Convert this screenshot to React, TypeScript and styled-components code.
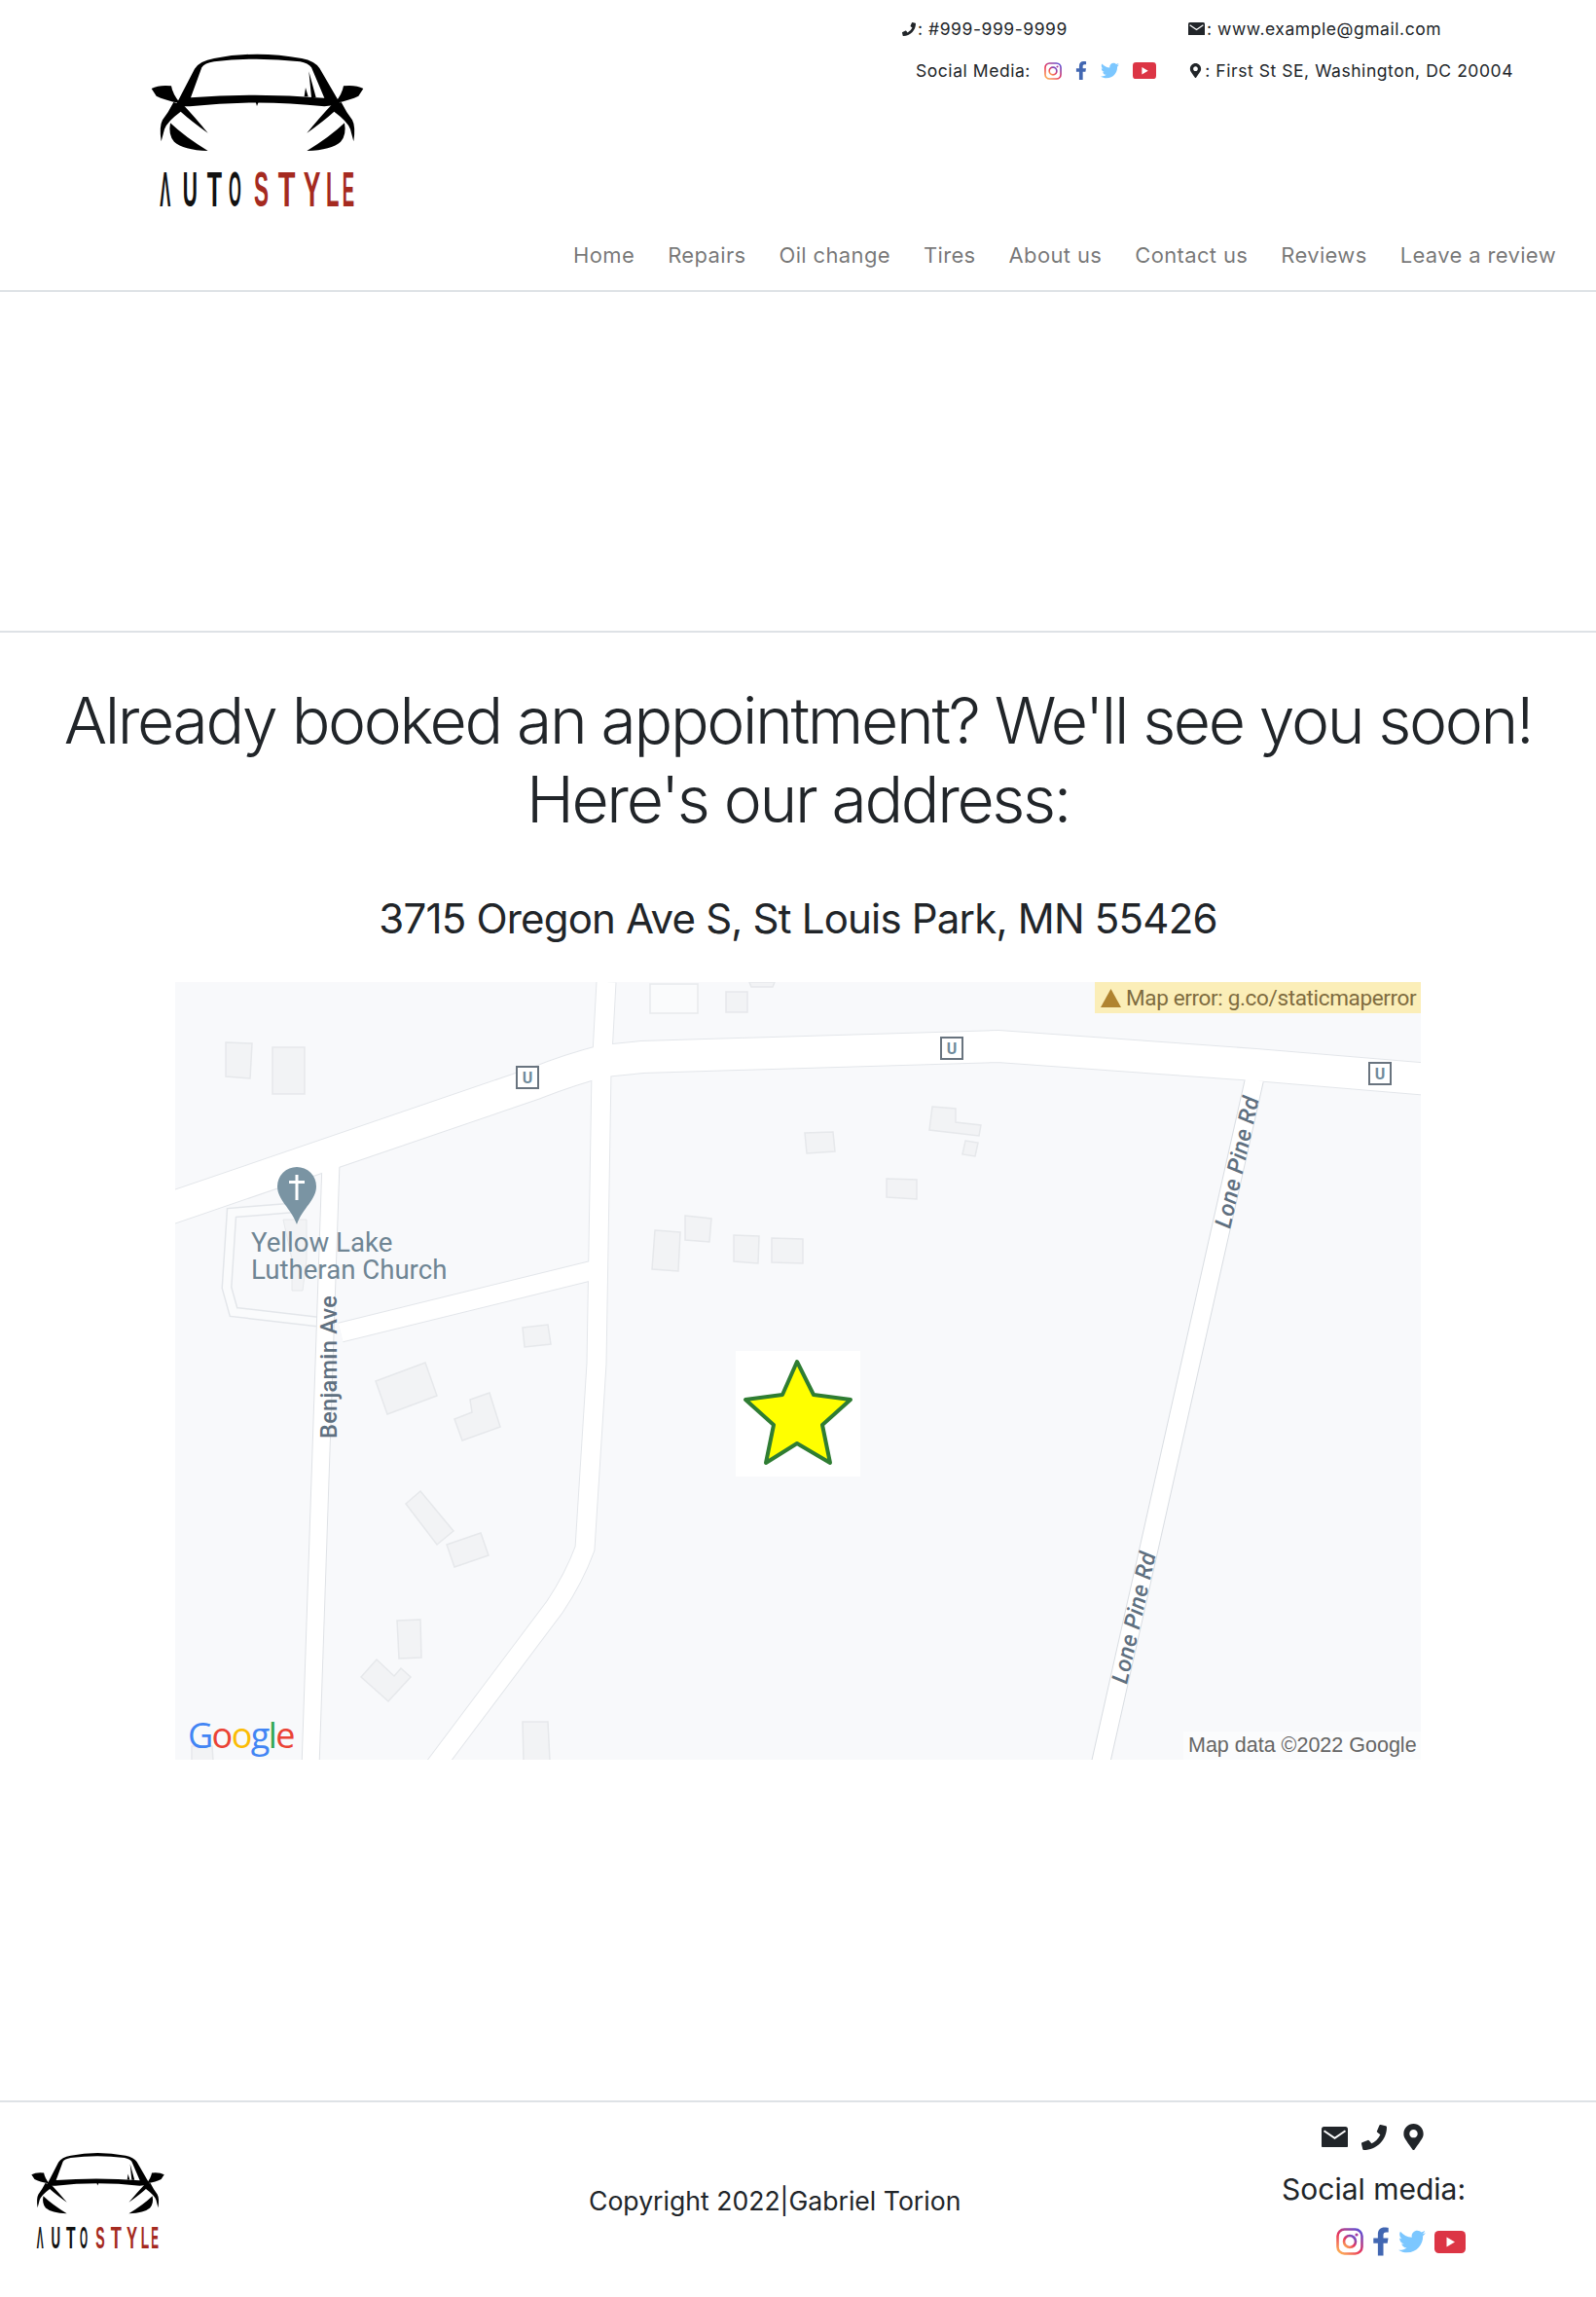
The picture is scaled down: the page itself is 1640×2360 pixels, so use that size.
import styled, { createGlobalStyle } from 'styled-components';
import { FaFacebookF, FaMapMarkerAlt, FaPhoneAlt, FaTwitter } from 'react-icons/fa';

const GlobalStyle = createGlobalStyle`
    html, body {
        margin: 0;
        padding: 0;
        background: #fff;
    }

    body {
        font-family: Inter, "Liberation Sans", sans-serif;
        color: #212529;
    }
`;

const Page = styled.div`
    width: 1640px;
    height: 2360px;
    display: flex;
    flex-direction: column;
    overflow: hidden;
`;

const Header = styled.header`
    height: 298px;
    border-bottom: 2px solid #dee2e6;
    display: flex;
    justify-content: space-between;
`;

const HeaderLogo = styled.div`
    margin: 30px 0 0 120px;
`;

const HeaderRight = styled.div`
    display: flex;
    flex-direction: column;
    justify-content: space-between;
    align-items: flex-end;
    padding-bottom: 20px;
`;

const ContactGrid = styled.div`
    display: grid;
    grid-template-columns: 294px 334px;
    grid-template-rows: 43px 43px;
    margin: 8px 85px 0 0;
    font-size: 17.5px;
    letter-spacing: 0.55px;
`;

const ContactItem = styled.div<{ $indent?: number }>`
    display: flex;
    align-items: center;
    padding-left: ${(p) => p.$indent ?? 0}px;
    white-space: nowrap;
`;

const InlineIcon = styled.span<{ $width: number }>`
    display: inline-flex;
    justify-content: center;
    width: ${(p) => p.$width}px;
    margin-right: 2px;
`;

const SocialIcons = styled.div<{ $gap: number; $offset?: number }>`
    display: flex;
    align-items: center;
    gap: ${(p) => p.$gap}px;
    margin-left: ${(p) => p.$offset ?? 0}px;
`;

const PhoneIcon = styled(FaPhoneAlt)`
    transform: scaleX(-1);
`;

const FacebookIcon = styled(FaFacebookF)<{ $width: number; $height: number }>`
    width: ${(p) => p.$width}px;
    height: ${(p) => p.$height}px;
    color: #4267b2;
`;

const TwitterIcon = styled(FaTwitter)`
    color: #7cc7ff;
`;

const Nav = styled.nav`
    display: flex;
    gap: 34px;
    margin-right: 41px;
`;

const NavLink = styled.a`
    font-size: 22px;
    letter-spacing: 0.35px;
    line-height: 32px;
    color: rgba(0, 0, 0, 0.55);
    white-space: nowrap;
`;

const Band = styled.div`
    height: 348px;
    border-bottom: 2px solid #dee2e6;
`;

const Main = styled.main`
    flex: 1;
    display: flex;
    flex-direction: column;
    align-items: center;
`;

const Heading = styled.h1`
    margin: 50px 0 0;
    font-size: 66px;
    line-height: 81px;
    font-weight: 300;
    letter-spacing: -2.36px;
    text-align: center;
    white-space: nowrap;
`;

const Address = styled.h2`
    margin: 52px 0 0;
    font-size: 42px;
    line-height: 60px;
    font-weight: 400;
    letter-spacing: -0.8px;
    text-align: center;
`;

const MapFrame = styled.div`
    position: relative;
    width: 1280px;
    height: 799px;
    margin-top: 35px;
    background: #f8f9fb;
    overflow: hidden;
`;

const MapError = styled.div`
    position: absolute;
    top: 0;
    right: 0;
    width: 335px;
    height: 32px;
    background: #fbeeb8;
    display: flex;
    align-items: center;
    gap: 5px;
    padding-left: 6px;
    box-sizing: border-box;
    font-family: Roboto, sans-serif;
    font-size: 22.5px;
    letter-spacing: -0.35px;
    color: #7f6c3f;
    white-space: nowrap;
`;

const MapData = styled.div`
    position: absolute;
    right: 0;
    bottom: 0;
    width: 244px;
    height: 29px;
    background: #fbfcfd;
    box-sizing: border-box;
    padding-left: 5px;
    font-family: "Liberation Sans", sans-serif;
    font-size: 21.5px;
    line-height: 29px;
    color: #666;
    white-space: nowrap;
`;

const Footer = styled.footer`
    height: 200px;
    border-top: 2px solid #dee2e6;
    display: flex;
`;

const FooterLogo = styled.div`
    margin: 36px 0 0 10px;
    width: 580px;
`;

const Copyright = styled.div`
    width: 720px;
    font-size: 26.6px;
    line-height: 34px;
    padding-top: 84px;
    margin-left: 15px;
`;

const FooterRight = styled.div`
    display: flex;
    flex-direction: column;
`;

const FooterContacts = styled.div`
    display: flex;
    align-items: center;
    gap: 14px;
    margin: 21px 0 0 33px;
    height: 29px;
`;

const SocialHeading = styled.div`
    font-size: 30px;
    line-height: 40px;
    margin: 19px 0 0 -8px;
    white-space: nowrap;
`;

const FooterSocial = styled.div`
    margin: 19px 0 0 48px;
`;

const wordmark = [
    { letter: 'Λ', x: 133, scale: 0.33, color: '#111' },
    { letter: 'U', x: 203, scale: 0.42, color: '#111' },
    { letter: 'T', x: 278, scale: 0.5, color: '#111' },
    { letter: 'O', x: 345, scale: 0.33, color: '#111' },
    { letter: 'S', x: 423, scale: 0.45, color: '#a52a20' },
    { letter: 'T', x: 497, scale: 0.58, color: '#a52a20' },
    { letter: 'Y', x: 575, scale: 0.53, color: '#a52a20' },
    { letter: 'L', x: 645, scale: 0.44, color: '#a52a20' },
    { letter: 'E', x: 695, scale: 0.37, color: '#a52a20' },
];

function Logo({ width }: { width: number }) {
    const side = (
        <>
            <path d="M107 183 Q130 171 168 175 Q172 200 195 228 Q145 218 122 206 Z" />
            <path d="M175 225 L205 233 Q240 270 281 320 Q228 282 197 254 Q155 285 147 308 L137 346 Q130 300 141 280 Q160 255 175 225 Z" />
            <path d="M165 289 Q210 332 281 375 Q205 372 177 347 Q158 327 165 289 Z" />
        </>
    );

    return (
        <svg width={width} height={(width * 2) / 3} viewBox="0 0 900 600" role="img" aria-label="Auto Style">
            <path
                fillRule="evenodd"
                d="M180 238 L240 122 Q255 98 300 90 Q430 64 570 90 Q610 98 625 120 L690 232 L640 238 Q430 215 225 238 Z M228 211 Q430 195 640 212 L600 118 Q590 105 565 100 Q430 84 300 100 Q270 105 262 118 Z"
            />
            <path d="M592 130 L614 210 L600 210 Z M582 180 L590 208 L578 208 Z M425 214 L441 214 L432 237 Z" />
            <g>{side}</g>
            <g transform="translate(867 0) scale(-1 1)">{side}</g>
            <g fontFamily='"Liberation Sans", sans-serif' fontWeight="700" fontSize="150">
                {wordmark.map((item) => (
                    <text key={item.x} transform={`translate(${item.x} 545) scale(${item.scale} 1)`} fill={item.color}>
                        {item.letter}
                    </text>
                ))}
            </g>
        </svg>
    );
}

function MailIcon({ width }: { width: number }) {
    return (
        <svg width={width} height={(width * 13) / 16} viewBox="0 0 16 13">
            <rect width="16" height="13" rx="1.5" fill="#212529" />
            <path d="M1.5 2.5 L8 7 L14.5 2.5" fill="none" stroke="#fff" strokeWidth="1.2" />
        </svg>
    );
}

function InstagramIcon({ size }: { size: number }) {
    return (
        <svg width={size} height={size} viewBox="0 0 28 28">
            <defs>
                <linearGradient id={`ig-${size}`} x1="0.1" y1="1" x2="0.9" y2="0">
                    <stop offset="0" stopColor="#fdb054" />
                    <stop offset="0.45" stopColor="#e8365d" />
                    <stop offset="1" stopColor="#5b51d8" />
                </linearGradient>
            </defs>
            <rect x="1.5" y="1.5" width="25" height="25" rx="7" fill="none" stroke={`url(#ig-${size})`} strokeWidth="2.6" />
            <circle cx="14" cy="14" r="6" fill="none" stroke={`url(#ig-${size})`} strokeWidth="2.6" />
            <circle cx="21" cy="7" r="1.6" fill="#a83ba0" />
        </svg>
    );
}

function YoutubeIcon({ width }: { width: number }) {
    return (
        <svg width={width} height={(width * 23) / 32} viewBox="0 0 32 23">
            <rect width="32" height="23" rx="4.5" fill="#dc3545" />
            <path d="M12.5 6.5 L21 11.5 L12.5 16.5 Z" fill="#fff" />
        </svg>
    );
}

const buildings = [
    '232,1070 259,1071 257,1107 232,1105',
    '280,1075 313,1075 313,1123 280,1123',
    '537,1363 563,1360 566,1380 539,1383',
    '746,1018 768,1018 768,1039 746,1039',
    '770,1008 796,1008 794,1013 772,1013',
    '827,1163 856,1162 858,1182 829,1184',
    '958,1136 982,1138 982,1152 1008,1155 1006,1166 955,1160',
    '992,1171 1005,1173 1002,1187 989,1185',
    '911,1210 942,1211 942,1231 911,1229',
    '704,1248 731,1251 729,1275 704,1273',
    '673,1263 699,1265 697,1305 670,1303',
    '754,1268 780,1269 779,1297 754,1295',
    '793,1271 825,1272 825,1297 793,1296',
    '386,1418 437,1399 449,1433 398,1452',
    '467,1457 485,1450 483,1437 503,1430 514,1465 475,1479',
    '417,1544 432,1531 466,1572 449,1586',
    '459,1586 494,1574 502,1597 467,1609',
    '408,1664 432,1663 433,1702 410,1703',
    '371,1722 387,1704 405,1721 412,1713 422,1722 399,1747',
    '537,1768 563,1768 565,1808 538,1808',
    '197,1793 218,1793 219,1808 197,1808',
];

const mainRoad = 'M170 1242 L550 1112 Q585 1098 620 1089 L660 1085 L1026 1074 L1290 1093 L1470 1108';
const centreRoad = 'M623 1008 L618 1100 L613 1400 L601 1590 Q590 1620 570 1650 L446 1815';
const benjaminAve = 'M340 1193 L319 1815';
const sideRoad = 'M350 1368 L610 1304';
const lonePineRd = 'M1289 1108 L1130 1815';

const shields = [
    [530, 1094],
    [966, 1064],
    [1406, 1090],
];

function MapDrawing() {
    return (
        <svg width="1280" height="799" viewBox="180 1008 1280 799">
            <rect x="180" y="1008" width="1280" height="799" fill="#f8f9fb" />
            <g style={{ filter: 'blur(0.6px)' }}>
                <rect x="668" y="1010" width="49" height="30" fill="#fafbfc" stroke="#e8eaed" strokeWidth="1.5" />
                {buildings.map((points) => (
                    <polygon key={points} points={points} fill="#f2f3f5" stroke="#e6e8eb" strokeWidth="1.5" />
                ))}
                <path d="M300 1240 L238 1245 L233 1322 L240 1347 L335 1358" fill="none" stroke="#e3e6ea" strokeWidth="11" />
                <path d="M300 1240 L238 1245 L233 1322 L240 1347 L335 1358" fill="none" stroke="#fafbfc" strokeWidth="8" />
                <polygon points="291,1252 315,1252 315,1293 311,1325 300,1325 300,1293" fill="#f2f3f5" stroke="#e6e8eb" />
                <path d={benjaminAve} fill="none" stroke="#dfe2e6" strokeWidth="19" />
                <path d={sideRoad} fill="none" stroke="#e3e6ea" strokeWidth="21" />
                <path d={lonePineRd} fill="none" stroke="#d9dde2" strokeWidth="20" />
                <path d={centreRoad} fill="none" stroke="#e3e6ea" strokeWidth="21" />
                <path d={mainRoad} fill="none" stroke="#e3e6ea" strokeWidth="34" />
                <path d={benjaminAve} fill="none" stroke="#fff" strokeWidth="17" />
                <path d={sideRoad} fill="none" stroke="#fff" strokeWidth="19" />
                <path d={lonePineRd} fill="none" stroke="#fff" strokeWidth="18" />
                <path d={centreRoad} fill="none" stroke="#fff" strokeWidth="19" />
                <path d={mainRoad} fill="none" stroke="#fff" strokeWidth="32" />
            </g>
            <path d="M305 1198 a20 20 0 0 1 20 20 c0 14 -14 22 -20 39 c-6 -17 -20 -25 -20 -39 a20 20 0 0 1 20 -20 Z" fill="#7a94a3" />
            <path d="M303.5 1206 h3 v6 h6.5 v3 h-6.5 v17 h-3 v-17 h-6.5 v-3 h6.5 Z" fill="#fff" />
            <g fontFamily="Roboto, sans-serif" fontSize="27.6" fill="#6f8594">
                <text x="258" y="1285">Yellow Lake</text>
                <text x="258" y="1313">Lutheran Church</text>
            </g>
            <g fontFamily="Roboto, sans-serif" fontSize="23.5" fontWeight="500" fill="#5f7080" letterSpacing="0.3">
                <text transform="translate(346 1477) rotate(-90)">Benjamin Ave</text>
                <text transform="translate(1158 1730) rotate(-77.5)" fontStyle="italic">Lone Pine Rd</text>
                <text transform="translate(1264 1262) rotate(-77.5)" fontStyle="italic">Lone Pine Rd</text>
            </g>
            {shields.map(([x, y]) => (
                <g key={x}>
                    <rect x={x + 1} y={y + 1} width="22" height="22" fill="#fff" stroke="#69747f" strokeWidth="2" />
                    <text x={x + 12} y={y + 18} textAnchor="middle" fontFamily="Roboto, sans-serif" fontWeight="700" fontSize="16" fill="#6f8b9c">U</text>
                </g>
            ))}
            <rect x="756" y="1387" width="128" height="129" fill="#fff" />
            <polygon
                points="819,1398 836,1432 874,1437 845,1463 853,1502 819,1482 787,1502 795,1463 766,1437 804,1432"
                fill="#ffff00"
                stroke="#2f7d33"
                strokeWidth="4"
                strokeLinejoin="round"
            />
            <text x="193" y="1795" fontFamily="'Open Sans', sans-serif" fontSize="36" fontWeight="500" letterSpacing="-1.6">
                <tspan fill="#4285f4">G</tspan>
                <tspan fill="#ea4335">o</tspan>
                <tspan fill="#fbbc05">o</tspan>
                <tspan fill="#4285f4">g</tspan>
                <tspan fill="#34a853">l</tspan>
                <tspan fill="#ea4335">e</tspan>
            </text>
        </svg>
    );
}

const navItems = ['Home', 'Repairs', 'Oil change', 'Tires', 'About us', 'Contact us', 'Reviews', 'Leave a review'];

export default function App() {
    return (
        <Page>
            <GlobalStyle />
            <Header>
                <HeaderLogo>
                    <Logo width={300} />
                </HeaderLogo>
                <HeaderRight>
                    <ContactGrid>
                        <ContactItem>
                            <InlineIcon $width={14}><PhoneIcon size={14} /></InlineIcon>
                            : #999-999-9999
                        </ContactItem>
                        <ContactItem>
                            <InlineIcon $width={17}><MailIcon width={17} /></InlineIcon>
                            : www.example@gmail.com
                        </ContactItem>
                        <ContactItem $indent={14}>
                            Social Media:
                            <SocialIcons $gap={14} $offset={14}>
                                <InstagramIcon size={18} />
                                <FacebookIcon $width={12} $height={19} />
                                <TwitterIcon size={19} />
                                <YoutubeIcon width={24} />
                            </SocialIcons>
                        </ContactItem>
                        <ContactItem>
                            <InlineIcon $width={17}><FaMapMarkerAlt size={15} /></InlineIcon>
                            : First St SE, Washington, DC 20004
                        </ContactItem>
                    </ContactGrid>
                    <Nav>
                        {navItems.map((item) => (
                            <NavLink key={item}>{item}</NavLink>
                        ))}
                    </Nav>
                </HeaderRight>
            </Header>
            <Band />
            <Main>
                <Heading>
                    Already booked an appointment? We'll see you soon!
                    <br />
                    Here's our address:
                </Heading>
                <Address>3715 Oregon Ave S, St Louis Park, MN 55426</Address>
                <MapFrame>
                    <MapDrawing />
                    <MapError>
                        <svg width="21" height="19" viewBox="0 0 21 19">
                            <path d="M10.5 0 L21 19 L0 19 Z" fill="#b0832f" />
                        </svg>
                        Map error: g.co/staticmaperror
                    </MapError>
                    <MapData>Map data ©2022 Google</MapData>
                </MapFrame>
            </Main>
            <Footer>
                <FooterLogo>
                    <Logo width={188} />
                </FooterLogo>
                <Copyright>Copyright 2022|Gabriel Torion</Copyright>
                <FooterRight>
                    <FooterContacts>
                        <MailIcon width={27} />
                        <PhoneIcon size={26} />
                        <FaMapMarkerAlt size={27} />
                    </FooterContacts>
                    <SocialHeading>Social media:</SocialHeading>
                    <FooterSocial>
                        <SocialIcons $gap={9}>
                            <InstagramIcon size={28} />
                            <FacebookIcon $width={18} $height={30} />
                            <TwitterIcon size={28} />
                            <YoutubeIcon width={32} />
                        </SocialIcons>
                    </FooterSocial>
                </FooterRight>
            </Footer>
        </Page>
    );
}
